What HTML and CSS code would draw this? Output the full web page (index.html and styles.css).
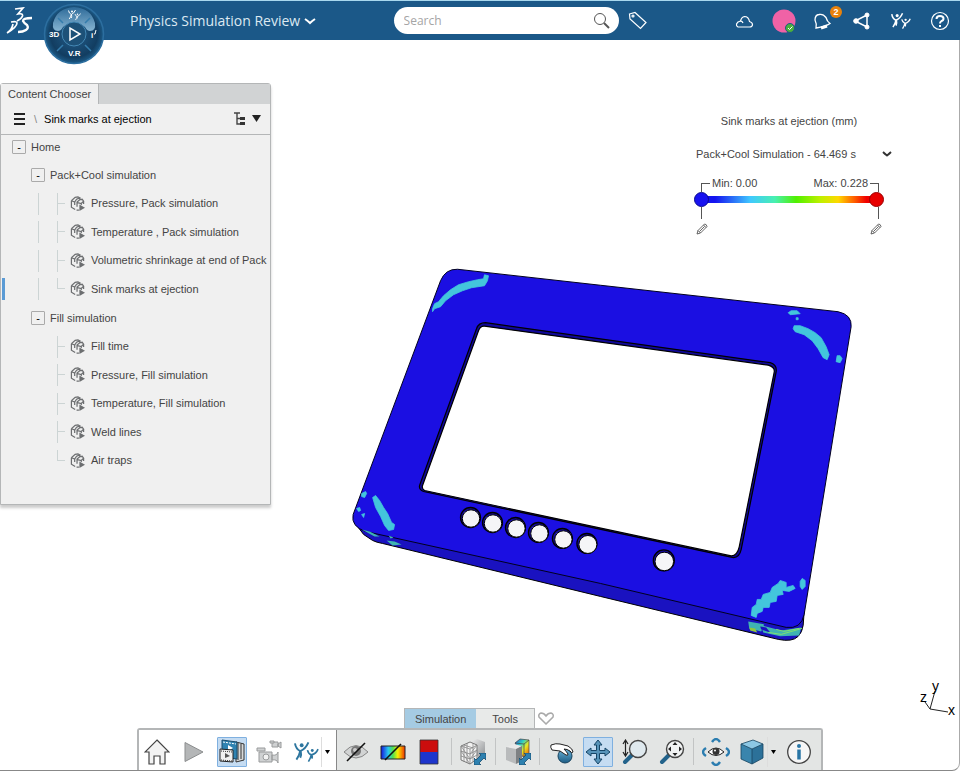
FILE: index.html
```
<!DOCTYPE html>
<html lang="en">
<head>
  <meta charset="UTF-8">
  <meta name="viewport" content="width=device-width, initial-scale=1.0">
  <title>Physics Simulation Review</title>
  <link rel="stylesheet" href="styles.css">
</head>

<body>
  <!-- shared icons -->
  <svg class="defs" aria-hidden="true">
    <symbol id="result" viewBox="0 0 16 16">
      <path d="M1.500 5l0 7 4 2.500M1.500 5l4-3.500 3-.5 2 1-3.500 1.500-2 3-3.500-1.500M5 6.500v3M10.500 2v2l-3 2.500v5M10 4l3-.5 1.500 2-2.500 2.500-4-1M12 8v1.500M14.500 5.500v3M7 15h2.500" fill="none" stroke="#6c6e70" stroke-width="1.300"/>
      <path d="M10 9l6 3.500-6 3.500z" fill="#6c6e70"/>
    </symbol>
    <symbol id="pencil" viewBox="0 0 12 12">
      <path d="M1 11l1-3.500 6.500-6.500q2 0 2.500 2.500l-6.500 6.500zM2 7.500l2.500 2.500M7.500 2l2.500 2.500M3.500 8.500l5-5" fill="none" stroke="#555" stroke-width=".9"/>
    </symbol>
    <symbol id="people" viewBox="0 0 26 22">
      <path d="M1 2q1 6 5.500 8M15 1q-3 7-8.500 9-1 5-4 9M7 10q1 4-.5 7" fill="none" stroke="currentColor" stroke-width="2"/>
      <circle cx="8" cy="4" r="2" fill="currentColor"/>
      <path d="M14 9q1 4 4 5M25 8q-2 5-7 6-1 4-3 7M18.500 14q1 2 0 4" fill="none" stroke="currentColor" stroke-width="1.700"/>
      <circle cx="19" cy="9.500" r="1.500" fill="currentColor"/>
    </symbol>
    <linearGradient id="metal" x1="0" y1="0" x2="1" y2="1">
      <stop offset="0" stop-color="#f4f4f4"/><stop offset="1" stop-color="#8d9092"/>
    </linearGradient>
    <linearGradient id="rainbow">
      <stop offset="0" stop-color="#1414dc"/><stop offset=".3" stop-color="#28c8f0"/><stop offset=".5" stop-color="#50e050"/><stop offset=".7" stop-color="#f8f000"/><stop offset="1" stop-color="#f03000"/>
    </linearGradient>
    <linearGradient id="heat" x1="0" y1="0" x2="1" y2="1">
      <stop offset="0" stop-color="#1e50d8"/><stop offset=".35" stop-color="#30d0c0"/><stop offset=".6" stop-color="#e8e820"/><stop offset="1" stop-color="#f04000"/>
    </linearGradient>
    <linearGradient id="blue" x1="0" y1="0" x2="0" y2="1">
      <stop offset="0" stop-color="#6bb4da"/><stop offset="1" stop-color="#1c5c84"/>
    </linearGradient>
    <symbol id="resize" viewBox="0 0 12 12">
      <path d="M5 0h7v7l-2-2-5 5 2 2h-7v-7l2 2 5-5z" fill="#2e81b0" stroke="#164d6e" stroke-width=".8"/>
    </symbol>
  </svg>

  <header class="topbar">
    <div class="brand">
      <svg class="logo" width="28" height="28" viewBox="0 0 28 28" fill="none" stroke="#fff" stroke-width="1.700">
        <path d="M9 2l8-1-5 6q5-1 4.500 2-1 3-5.500 5"/>
        <path d="M5 15q6-1 6 1 0 4-10 10 5-3 6-9"/>
        <path d="M26 11q-9 0-9 3 1 2 4 4 2 3-1 5-3 2-8 2" stroke-width="2.300"/>
      </svg>
      <button class="compass" aria-label="Compass">
        <svg width="62" height="62" viewBox="0 0 62 62">
          <defs>
            <radialGradient id="disc"><stop offset="0" stop-color="#245f8c"/><stop offset=".8" stop-color="#123d61"/><stop offset="1" stop-color="#1c5b88"/></radialGradient>
            <linearGradient id="gloss" x1="0" y1="0" x2="0" y2="1"><stop offset="0" stop-color="#2d6a98"/><stop offset="1" stop-color="#86b4d2"/></linearGradient>
          </defs>
          <circle cx="31" cy="31" r="29.500" fill="url(#disc)" stroke="#2c6e9f" stroke-width="1.500"/>
          <path d="M10 20q4-15 21-16 17 1 21 16 1 8-5 8-3 0-5-4-11-9-22 0-2 4-5 4-6 0-5-8z" fill="url(#gloss)"/>
          <path d="M14 48l6-6M48 48l-6-6M15 15l5 5M47 15l-5 5" stroke="#347cac" stroke-width="1.500"/>
          <circle cx="31" cy="31" r="12" fill="#1d5178" stroke="#4488b5"/>
          <path d="M27 25v12l10-6z" fill="none" stroke="#fff" stroke-width="1.500"/>
          <svg x="25" y="6" width="13" height="12" color="#fff"><use href="#people"/></svg>
          <g class="compass-text"><text x="6" y="34">3D</text><text x="48" y="35">i</text><text x="25" y="53">V.R</text></g>
          <path d="M51 31l1 0 1-4" stroke="#fff" fill="none"/>
        </svg>
      </button>
      <button class="app-title">Physics Simulation Review
        <svg width="12" height="8" viewBox="0 0 12 8"><path d="M1 2q3 2 5 4 2-2 5-4" fill="none" stroke="#fff" stroke-width="2"/></svg>
      </button>
    </div>

    <form class="search">
      <input type="search" placeholder="Search" aria-label="Search">
      <button type="button" aria-label="Run search">
        <svg width="18" height="18" viewBox="0 0 18 18" fill="none" stroke="#555"><circle cx="7" cy="7" r="5.500"/><path d="M11 11l5 5" stroke-width="2"/></svg>
      </button>
    </form>

    <nav class="actions">
      <button class="tag" aria-label="Tags">
        <svg width="20" height="20" viewBox="0 0 20 20" fill="none" stroke="#fff" stroke-width="1.200"><path d="M1.500 3l5.500-1.500 11 10-5.500 6-10.500-9.500z"/><circle cx="5" cy="5" r="1"/></svg>
      </button>
      <button aria-label="Cloud">
        <svg width="20" height="20" viewBox="0 0 20 20" fill="none" stroke="#fff" stroke-width="1.200"><path d="M3 16q-2-1-1.500-3 1-2.500 4-3 1-4 4-4.500 4 0 5 5 3 1 3 3 0 2.500-3 2.500zM4 10.500q3-1 4 1.500"/></svg>
      </button>
      <button class="avatar" aria-label="Profile">
        <svg width="24" height="24" viewBox="0 0 24 24"><circle cx="12" cy="12" r="11.500" fill="#f062a6"/><circle cx="18" cy="19" r="4.500" fill="#4caf3c" stroke="#1b5a88"/><path d="M16 19l1.500 1.500 3-3" stroke="#fff" fill="none"/></svg>
      </button>
      <button class="bell" aria-label="Notifications">
        <svg width="20" height="20" viewBox="0 0 20 20" fill="none" stroke="#fff" stroke-width="1.300"><path d="M3 17q1-4-1-8 0-5 4-5.500 4-1 7 3 1 4 4 6-4 3-14 4.500z"/><path d="M8 17l6-2" stroke-width="3"/></svg>
        <span class="badge">2</span>
      </button>
      <button aria-label="Share">
        <svg width="20" height="20" viewBox="0 0 20 20" fill="#fff" stroke="#fff"><path d="M15 4l-12 6 12 6zM5 10" fill="none" stroke-width="1.500"/><circle cx="4" cy="10" r="2.300"/><circle cx="15" cy="4" r="2"/><circle cx="15" cy="16" r="2"/></svg>
      </button>
      <button aria-label="Community">
        <svg width="20" height="18"><use href="#people"/></svg>
      </button>
      <button aria-label="Help">
        <svg width="20" height="20" viewBox="0 0 20 20" fill="none" stroke="#fff"><circle cx="10" cy="10" r="8.500" stroke-width="1.200"/><path d="M6.500 8q0-3 3.500-3t3.500 2.500q0 2-2 2.500-1.500 1-1.500 2.500M10 14v2" stroke-width="2"/></svg>
      </button>
    </nav>
  </header>

  <main class="workspace">
    <svg class="scene" viewBox="0 0 960 731" role="img" aria-label="Sink marks on the frame">
      <g transform="translate(1 -39)">
        <!-- lower side of the part -->
        <path d="M354 522l9 12 9 6q4 2 10 3l218 53 178 43q14 3 20-3 4-4 5-11l1-14-200-60z" fill="#1a12c0" stroke="#000"/>
        <!-- face -->
        <path d="M440 280q5-12 17-11.500l143 16 238 26.500q14 3 13 15l-47 288q-3 15-18 13l-186-44-235-52q-15-5-12.500-17z" fill="#1b0fe2" stroke="#00001e"/>
        <path d="M476 328q2-6 9-6l285 40q7 2 6 9l-35 178q-2 9-9 8l-309-66q-5-2-4-6z" fill="#10089a" stroke="#000" stroke-width="1.200"/>
        <path d="M478 330q2-5 6-4.500l284 39q7 2 6 7l-35 175q-2 9-8 9l-307-65.500q-3-2-2-5z" fill="#fff" stroke="#000" stroke-width="1.200"/>
        <g fill="#150b9c" stroke="#000" stroke-width="1.300">
          <circle cx="470" cy="517" r="10"/><circle cx="492" cy="522" r="10"/><circle cx="515" cy="527" r="10"/><circle cx="538" cy="532" r="10"/><circle cx="562" cy="538" r="10"/><circle cx="586.500" cy="543" r="10"/><circle cx="663.500" cy="560" r="10.500"/>
        </g>
        <g fill="#f5f5f7" stroke="#000">
          <circle cx="470.500" cy="518" r="8.700"/><circle cx="492.500" cy="523" r="8.700"/><circle cx="516" cy="528" r="8.700"/><circle cx="539" cy="533" r="8.700"/><circle cx="563" cy="539" r="8.700"/><circle cx="587.500" cy="544" r="9"/><circle cx="664" cy="561" r="9.300"/>
        </g>
        <!-- sink marks -->
        <g fill="#43c6dc" stroke="#43c6dc" stroke-width=".8" stroke-linejoin="round">
          <path d="M432 308l2-5 4-2 5-6 7-6 8-5 10-3 9-2 6-1 1-4 4 1-1 5-3 5-13 2-9 3-9 4-8 6-5 6-6 2-2 3z"/>
          <path d="M788 312l3-2 6 0 3 3-10 1zM796 317h2v2h-2zM794 325l6 0 8 3 7 4 6 5 5 9 3 8-2 5-4-2-5-9-6-8-8-6-9-3-2-3zM837 355l3 0 2 3-2 4-4-1z"/>
          <path d="M372 497l3-2 4 5 4 7 4 6 4 9 3 2-1 5-5 1-4-5-4-9-5-9zM361 493l4-2 1 2-2 4-3-1zM356 508l3-1 1 3-2 1zM361 514l3-1-1 4z"/>
          <path d="M751 615l1-8 4-3 1-5 4 0 2-5 7-2 2-5 6-4 2-3 6 2v5l7-2 2 3-6 3-7-1 1 4-6 1-1 6-6 1-1 5-6 0-1 4-5 2-1 4zM800 581l2-3 3 2 0 6-3 3-2-3z"/>
        </g>
        <g fill="#3fb4b2">
          <path d="M361 529l8 2 10 5-5 0zM386 540l8 1 7 3-9 1zM388 535l5 2-3 1zM748 621l16 3-3 7-12-3zM761 625l20 5 20-3-2 8-19 1-17-4z"/>
          <path d="M749 627l6 1 2 4-7-2z" fill="#8fc83c"/><path d="M760 626l6 1 4 5-9-3z" fill="#1b0fc0"/>
          <path d="M768 632l13 2 21-6M776 629l8 2 15-3" fill="none" stroke="#7ee070"/>
        </g>
      </g>
    </svg>

    <section class="chooser">
      <h2 class="chooser-tab">Content Chooser</h2>
      <div class="crumbs">
        <button aria-label="Menu"><svg width="11" height="12" viewBox="0 0 11 12"><path d="M0 1h11M0 6h11M0 11h11" stroke="#222" stroke-width="2"/></svg></button>
        <span class="slash">\</span>
        <strong>Sink marks at ejection</strong>
        <button class="view" aria-label="Tree view"><svg width="28" height="14" viewBox="0 0 28 14"><path d="M0 1h6M3 1v11h3M3 6.500h3" fill="none" stroke="#444" stroke-width="1.400"/><path d="M6 5h5v3h-5zM6 10h5v3h-5z" fill="#333"/><path d="M18 3h9l-4.500 7z" fill="#222"/></svg></button>
      </div>
      <ul class="tree">
        <li>
          <div class="row root"><button class="toggle">-</button>Home</div>
          <ul>
            <li>
              <div class="row group"><button class="toggle">-</button>Pack+Cool simulation</div>
              <ul class="leaves guided">
                <li class="leaf"><svg class="cube"><use href="#result"/></svg>Pressure, Pack simulation</li>
                <li class="leaf"><svg class="cube"><use href="#result"/></svg>Temperature , Pack simulation</li>
                <li class="leaf"><svg class="cube"><use href="#result"/></svg>Volumetric shrinkage at end of Pack</li>
                <li class="leaf selected"><svg class="cube"><use href="#result"/></svg>Sink marks at ejection</li>
              </ul>
            </li>
            <li>
              <div class="row group"><button class="toggle">-</button>Fill simulation</div>
              <ul class="leaves">
                <li class="leaf"><svg class="cube"><use href="#result"/></svg>Fill time</li>
                <li class="leaf"><svg class="cube"><use href="#result"/></svg>Pressure, Fill simulation</li>
                <li class="leaf"><svg class="cube"><use href="#result"/></svg>Temperature, Fill simulation</li>
                <li class="leaf"><svg class="cube"><use href="#result"/></svg>Weld lines</li>
                <li class="leaf"><svg class="cube"><use href="#result"/></svg>Air traps</li>
              </ul>
            </li>
          </ul>
        </li>
      </ul>
    </section>

    <section class="legend">
      <h2>Sink marks at ejection (mm)</h2>
      <div class="step">
        <select aria-label="Simulation step"><option>Pack+Cool Simulation - 64.469 s</option></select>
        <svg width="10" height="6" viewBox="0 0 10 6"><path d="M1 1q2 2 4 3.500 2-1.500 4-3.500" fill="none" stroke="#333" stroke-width="1.800"/></svg>
      </div>
      <div class="limits">
        <label class="min" for="min">Min: 0.00</label>
        <label class="max" for="max">Max: 0.228</label>
      </div>
      <div class="scale">
        <input type="range" id="min" min="0" max="100" value="0">
        <input type="range" id="max" min="0" max="100" value="100">
      </div>
      <div class="edit">
        <button aria-label="Edit minimum"><svg width="12" height="12"><use href="#pencil"/></svg></button>
        <button aria-label="Edit maximum"><svg width="12" height="12"><use href="#pencil"/></svg></button>
      </div>
    </section>

    <svg class="triad" width="38" height="42" viewBox="0 0 38 42">
      <path d="M11 31l5-18M11 31l18 3M11 31l-5-7" stroke="#222" fill="none"/>
      <text x="13" y="13">y</text><text x="1" y="24">z</text><text x="29" y="37">x</text>
    </svg>

    <footer class="actionbar">
      <div class="tabs">
        <button class="tab active">Simulation</button>
        <button class="tab">Tools</button>
        <button class="heart" aria-label="Collapse"><svg width="18" height="14" viewBox="0 0 18 14"><path d="M9 13l-7-7q-1-3 2-4 3 0 5 3 2-3 5-3 3 1 2 4z" fill="#fff" stroke="#aaa" stroke-width="1.500"/></svg></button>
      </div>
      <div class="toolbar">
        <div class="tools standard">
          <button class="tool" aria-label="Home">
            <svg width="26" height="26" viewBox="0 0 26 26"><path d="M13 1l12 12h-4v12h-5v-8h-6v8h-5v-12h-4z" fill="#f3f3f3" stroke="#444" stroke-width="1.200"/></svg>
          </button>
          <button class="tool" aria-label="Play">
            <svg width="20" height="22" viewBox="0 0 20 22"><path d="M1 1.500l18 9.500-18 9.500z" fill="#b4b6b7" stroke="#8b8d8e"/></svg>
          </button>
          <button class="tool on" aria-label="Media">
            <svg width="28" height="26" viewBox="0 0 28 26"><path d="M18 3l8 2v16l-8 2z" fill="#d8dadb" stroke="#333"/><path d="M20 4v17M23 5v15" stroke="#333"/><path d="M4 1l15 2v17l-15-2z" fill="#2f83b2" stroke="#1b4c6c"/><path d="M5 3l13 2" stroke="#fff" stroke-dasharray="2 1"/><path d="M10 6l5 3-5 3z" fill="#fff"/><path d="M2 10l13 1v12l-13-1z" fill="#f0f0f0" stroke="#222"/><path d="M3 12l11 1M3 21l11 1" stroke="#333" stroke-dasharray="1 1"/><path d="M7 14l5 3-5 2z" fill="#555"/></svg>
          </button>
          <button class="tool" aria-label="Record">
            <svg width="26" height="26" viewBox="0 0 26 26" fill="#cfd1d2" stroke="#999b9c"><path d="M1 9h8v3h-8zM3 13h13v10h-13zM16 16q5 1 6-3v11q-1-4-6-3zM16 3h6v5h-6zM22 5l3-2v6l-3-2z"/><circle cx="10" cy="18" r="3" fill="#f2f2f2"/><path d="M14 2h4v2h-4z"/></svg>
          </button>
          <div class="split">
            <button class="tool teal" aria-label="Community"><svg width="25" height="22"><use href="#people"/></svg></button>
            <button class="more" aria-label="More community tools"><svg width="5" height="4" viewBox="0 0 5 4"><path d="M0 0h5l-2.500 4z"/></svg></button>
          </div>
        </div>
        <div class="tools simulation">
          <button class="tool" aria-label="Hide and show">
            <svg width="26" height="26" viewBox="0 0 26 26"><path d="M1 13q12-13 24 0-12 12-24 0z" fill="#d2d4d4" stroke="#888"/><circle cx="13" cy="12" r="5" fill="#777"/><circle cx="12" cy="11" r="2" fill="#ccc"/><path d="M4 22l18-18" stroke="#111" stroke-width="1.600"/></svg>
          </button>
          <button class="tool" aria-label="Contours">
            <svg width="26" height="20" viewBox="0 0 26 20"><path d="M1 4h24v13h-24z" fill="url(#rainbow)" stroke="#222"/><path d="M5 18l16-16" stroke="#111" stroke-width="1.600"/></svg>
          </button>
          <button class="tool" aria-label="Threshold">
            <svg width="20" height="26" viewBox="0 0 20 26"><path d="M1 1h18v12h-18z" fill="#cc0d0d"/><path d="M1 13h18v12h-18z" fill="#1d35cc"/><path d="M1 1h18v24h-18z" fill="none" stroke="#333" stroke-width=".8"/></svg>
          </button>
          <span class="sep"></span>
          <button class="tool" aria-label="Mesh display">
            <svg width="28" height="28" viewBox="0 0 28 28"><path d="M10 5l8-4 8 3v12l-6 4z" fill="url(#metal)"/><path d="M2 8l9-4 7 3v14l-7 5-9-4z" fill="#f2f2f2" stroke="#777"/><path d="M2 8l9 3v15M11 11l7-4M2 13l9 3 7-4M2 18l9 3 7-4M5 7v17M8 5v20M14 5v19M5 7l9 3M2 8l9 13M2 13l9 13M18 7l-7 9M18 12l-7 9" fill="none" stroke="#888" stroke-width=".8"/><use href="#resize" x="15" y="15" width="12" height="12"/></svg>
          </button>
          <span class="sep"></span>
          <button class="tool" aria-label="Result display">
            <svg width="28" height="28" viewBox="0 0 28 28"><path d="M11 5l5-4 9 1v14l-6 3z" fill="url(#heat)" stroke="#444" stroke-width=".7"/><path d="M11 5l9 1 5-4M20 6v13" fill="none" stroke="#444" stroke-width=".7"/><path d="M2 9l8-3 8 2-6 4z" fill="#e9e9e9"/><path d="M2 9l10 2v15l-10-4z" fill="#b9bbbc"/><path d="M12 11l6-3v15l-6 3z" fill="#7e8183"/><use href="#resize" x="15" y="15" width="12" height="12"/></svg>
          </button>
          <span class="sep"></span>
          <button class="tool" aria-label="Rotate">
            <svg width="26" height="26" viewBox="0 0 26 26"><circle cx="16" cy="17" r="7" fill="url(#blue)" stroke="#17435f"/><path d="M2 6q5-2 9-1l8 2q5 3 5 6-1 2-3-1-3-2-6-2 2 2 4 5 0 2-2 1l-6-4-8-1q-2-3-1-5z" fill="#fff" stroke="#222"/></svg>
          </button>
          <button class="tool on" aria-label="Pan">
            <svg width="26" height="26" viewBox="0 0 26 26"><path d="M13 1l4 5h-2.500v5.500h5.500v-2.500l5 4-5 4v-2.500h-5.500v5.500h2.500l-4 5-4-5h2.500v-5.500h-5.500v2.500l-5-4 5-4v2.500h5.500v-5.500h-2.500z" fill="#5793b9" stroke="#174566"/></svg>
          </button>
          <button class="tool" aria-label="Zoom">
            <svg width="26" height="26" viewBox="0 0 26 26"><path d="M3.500 2v14M1 5l2.500-4 2.500 4M1 13l2.500 4 2.500-4" fill="none" stroke="#222" stroke-width="1.200"/><path d="M10 16l-7 7" stroke="#23638b" stroke-width="4" stroke-linecap="round"/><circle cx="16" cy="10" r="8.500" fill="#dfe9ee" stroke="#444" stroke-width="1.400"/></svg>
          </button>
          <button class="tool" aria-label="Fit all">
            <svg width="26" height="26" viewBox="0 0 26 26"><path d="M10 16l-7 7" stroke="#23638b" stroke-width="4" stroke-linecap="round"/><circle cx="16" cy="10" r="8.500" fill="#f1f3f3" stroke="#444" stroke-width="1.400"/><path d="M16 3l2.500 3h-5zM16 17l2.500-3h-5zM9 10l3-2.500v5zM23 10l-3-2.500v5z" fill="#222"/></svg>
          </button>
          <span class="sep"></span>
          <button class="tool" aria-label="Look at">
            <svg width="28" height="28" viewBox="0 0 28 28"><path d="M10 4q2-3 4-3t4 3M10 24q2 3 4 3t4-3M4 10q-3 2-3 4t3 4M24 10q3 2 3 4t-3 4" fill="none" stroke="#2b7db0" stroke-width="2.400"/><path d="M6 14q8-8 16 0-8 7-16 0z" fill="#fff" stroke="#222"/><circle cx="14" cy="13.500" r="3.500" fill="#333"/><circle cx="13" cy="12.500" r="1" fill="#fff"/></svg>
          </button>
          <div class="split">
            <button class="tool" aria-label="Views"><svg width="24" height="26" viewBox="0 0 24 26"><path d="M1 5l12-4 10 4-11 5z" fill="#8cc7e4"/><path d="M1 5l11 5v15l-11-5z" fill="#3a85ad"/><path d="M12 10l11-5v14l-11 6z" fill="#2c7199"/><path d="M1 5l12-4 10 4v14l-11 6-11-5zM1 5l11 5v15M12 10l11-5" fill="none" stroke="#174460" stroke-width=".8"/></svg></button>
            <button class="more" aria-label="More views"><svg width="5" height="4" viewBox="0 0 5 4"><path d="M0 0h5l-2.500 4z"/></svg></button>
          </div>
          <button class="tool" aria-label="Information">
            <svg width="26" height="26" viewBox="0 0 26 26"><circle cx="13" cy="13" r="11.300" fill="#f6f6f6" stroke="#444" stroke-width="1.300"/><circle cx="13" cy="7" r="2" fill="#2a76a6"/><path d="M13 10.500v10" stroke="#2a76a6" stroke-width="3.500"/></svg>
          </button>
        </div>
      </div>
    </footer>
  </main>
</body>
</html>
```
FILE: styles.css
```
* {
  box-sizing: border-box;
}

body {
  margin: 0;
  min-height: 100vh;
  display: flex;
  flex-direction: column;
  background-color: #fff;
  color: #444;
  font-family: "Liberation Sans", Arial, sans-serif;
  font-size: 11px;
}

button {
  padding: 0;
  border: 0;
  background: none;
  color: inherit;
  font: inherit;
  cursor: pointer;
}

button svg {
  display: block;
}

h2 {
  margin: 0;
  font-size: 11px;
  font-weight: normal;
}

ul {
  margin: 0;
  padding: 0;
  list-style: none;
}

.defs {
  position: absolute;
  width: 0;
  height: 0;
}

/* top bar */
.topbar {
  position: relative;
  z-index: 2;
  display: grid;
  grid-template-columns: 41% 225px 1fr;
  align-items: center;
  height: 40px;
  border-top: 1px solid #a9d8ee;
  background-color: #1b5888;
  color: #fff;
}

.brand {
  display: flex;
  align-items: center;
  padding-left: 6px;
}

.compass {
  position: absolute;
  top: 2px;
  left: 43px;
}

.compass-text {
  fill: #fff;
  font-size: 8px;
  font-weight: bold;
}

.app-title {
  display: flex;
  align-items: center;
  gap: 4px;
  margin-left: 96px;
  color: #dce9f2;
  font-family: "Open Sans", sans-serif;
  font-size: 14px;
  white-space: nowrap;
}

.search {
  display: flex;
  align-items: center;
  height: 27px;
  padding: 0 8px 0 10px;
  border-radius: 14px;
  background-color: #fff;
}

.search input {
  flex: 1;
  min-width: 0;
  padding: 0;
  border: 0;
  outline: 0;
  background: none;
  font-family: "Open Sans", sans-serif;
  font-size: 12px;
}

.search input::placeholder {
  color: #a5a5a5;
}

.actions {
  display: flex;
  align-items: center;
  justify-content: flex-end;
  gap: 19px;
  padding: 0 10px 0 9px;
}

.actions .tag {
  margin-right: auto;
}

.actions .avatar {
  margin: 0 -2px;
}

.bell {
  position: relative;
}

.badge {
  position: absolute;
  top: -5px;
  right: -9px;
  width: 12px;
  border-radius: 6px;
  background-color: #e8820c;
  font-size: 9px;
  font-weight: bold;
  line-height: 12px;
}

/* 3D view */
.workspace {
  position: relative;
  flex: 1;
  display: grid;
  grid-template-columns: 271px 200px;
  grid-template-rows: 1fr auto;
  justify-content: space-between;
  align-items: start;
  padding-right: 63px;
  border-right: 1px solid #aaa;
  border-bottom: 1px solid #888;
  border-bottom-right-radius: 8px;
}

.scene {
  position: absolute;
  top: 0;
  left: 0;
  width: 100%;
}

.triad {
  position: absolute;
  right: 2px;
  bottom: 50px;
  font-size: 14px;
}

/* content chooser */
.chooser {
  position: relative;
  margin-top: 43px;
  padding-bottom: 30px;
  border: 1px solid #b4b6b7;
  border-radius: 3px 3px 0 0;
  background-color: #f0f0f0;
  box-shadow: 0 3px 3px #ccc;
}

.chooser-tab {
  height: 20px;
  padding-left: 7px;
  background: linear-gradient(90deg, #f0f0f0 97px, #b4b6b7 97px, #b4b6b7 98px, #d1d3d4 98px);
  line-height: 20px;
}

.crumbs {
  display: flex;
  align-items: center;
  height: 31px;
  padding: 0 8px 0 13px;
  border-bottom: 1px solid #b4b6b7;
}

.crumbs strong {
  color: #000;
  font-weight: normal;
}

.slash {
  margin: 0 7px 0 9px;
  color: #888;
}

.view {
  margin-left: auto;
}

.row {
  display: flex;
  align-items: center;
  gap: 5px;
}

.root {
  height: 23px;
  margin-bottom: 2px;
  padding-left: 11px;
}

.group {
  height: 29px;
  padding-left: 30px;
}

.toggle {
  width: 14px;
  height: 14px;
  border: 1px solid #aaa;
  border-radius: 1px;
  color: #000;
  line-height: 10px;
}

.leaf {
  position: relative;
  display: flex;
  align-items: center;
  gap: 6px;
  height: 28px;
  padding-left: 69px;
  white-space: nowrap;
}

.leaf:nth-child(even) {
  height: 29px;
}

.leaf::before {
  content: "";
  position: absolute;
  top: 4px;
  left: 56px;
  width: 7px;
  height: 22px;
  background: linear-gradient(#ccd4d4, #ccd4d4) 0 10px / 7px 1px no-repeat;
  border-left: 1px solid #ccd4d4;
}

.leaf:last-child::before {
  height: 11px;
}

.guided .leaf::after {
  content: "";
  position: absolute;
  top: 4px;
  left: 37px;
  height: 22px;
  border-left: 1px solid #ccd4d4;
}

.selected {
  background: linear-gradient(#5b9bd5, #5b9bd5) 1px 4px / 3px 22px no-repeat;
}

.cube {
  width: 15px;
  height: 15px;
}

/* legend */
.legend {
  position: relative;
  margin-top: 73px;
  padding-right: 4px;
}

.legend h2 {
  padding-right: 10px;
  text-align: center;
  line-height: 16px;
}

.step {
  display: flex;
  align-items: center;
  height: 16px;
  margin-top: 17px;
}

.step select {
  flex: 1;
  padding: 0;
  border: 0;
  outline: 0;
  appearance: none;
  background: none;
  color: inherit;
  font: inherit;
}

.limits {
  display: flex;
  justify-content: space-between;
  margin: 13px 13px 0 5px;
  line-height: 16px;
}

.limits label {
  display: flex;
}

.limits .min::before,
.limits .max::after {
  content: "";
  width: 8px;
  height: 8px;
  margin-top: 8px;
  border-top: 1px solid #555;
}

.limits .min::before {
  margin-right: 2px;
  border-left: 1px solid #555;
}

.limits .max::after {
  margin-left: 2px;
  border-right: 1px solid #555;
}

.scale {
  display: flex;
  width: 190px;
  height: 15px;
  margin-left: -2px;
  background: linear-gradient(90deg, #1414f0 8%, #40c8ff 28%, #48f0b0 42%, #50f000 54%, #c0f000 68%, #ffd800 78%, #ff6000 87%, #f00000 94%) 7px 4px / 176px 7px no-repeat;
}

.scale input {
  flex: 1;
  min-width: 0;
  height: 15px;
  margin: 0;
  appearance: none;
  background: none;
}

.scale input::-webkit-slider-thumb {
  width: 15px;
  height: 15px;
  appearance: none;
  border: 1px solid #0a0a90;
  border-radius: 50%;
  background-color: #1812f0;
}

.scale #max::-webkit-slider-thumb {
  border-color: #900;
  background-color: #e80000;
}

.edit {
  display: flex;
  justify-content: space-between;
  width: 190px;
  padding-right: 4px;
}

.edit button {
  padding-top: 16px;
  background: linear-gradient(#555, #555) 5px 0 / 1px 12px no-repeat;
}

.edit button:last-child {
  background-position-x: 8px;
}

/* action bar */
.actionbar {
  position: relative;
  grid-column: 1 / -1;
  grid-row: 2;
  justify-self: center;
  width: 686px;
  margin-right: -64px;
}

.tabs {
  display: flex;
  padding-left: 267px;
  color: #444;
}

.tab {
  height: 20px;
  padding: 0 16px;
  border: solid #b4b6b7;
  border-width: 1px 1px 0 0;
  background-color: #e8eae9;
}

.tab.active {
  padding: 0 10px;
  border-width: 1px 0 0 1px;
  background-color: #a5cbe3;
}

.heart {
  margin-left: 2px;
}

.toolbar {
  display: flex;
  height: 42px;
  border: 2px solid #b4b6b7;
  border-bottom: 0;
  border-radius: 3px 3px 0 0;
}

.tools {
  display: flex;
  align-items: center;
  justify-content: space-between;
  padding-top: 3px;
}

.standard {
  width: 197px;
  padding-left: 3px;
  padding-right: 5px;
  background-color: #fff;
}

.simulation {
  flex: 1;
  padding-left: 4px;
  padding-right: 7px;
  border-left: 1px solid #888;
  background-color: #e3e5e4;
}

.tool {
  display: flex;
  align-items: center;
  justify-content: center;
  width: 30px;
  height: 30px;
}

.tool.on {
  border: 1px solid #7fb0e0;
  border-radius: 1px;
  background-color: #c5dcf2;
}

.teal {
  color: #2d769f;
}

.split {
  display: flex;
}

.more {
  width: 10px;
  padding-left: 3px;
  border-left: 1px solid #ddd;
}

.sep {
  width: 1px;
  height: 27px;
  background-color: #c2c4c4;
}
```
